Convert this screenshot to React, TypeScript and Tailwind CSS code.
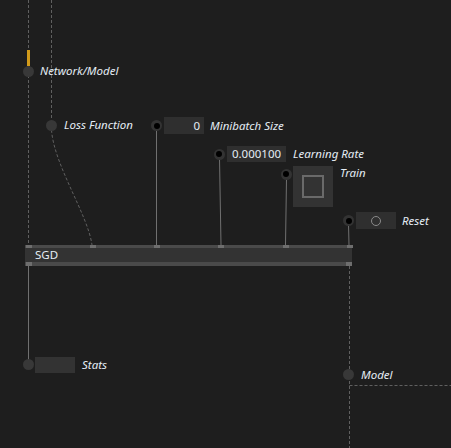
import React from "react";

const font = { fontFamily: '"Noto Sans", "Open Sans", sans-serif' };

function Dot({ dark, className = "" }: { dark?: boolean; className?: string }) {
  return dark ? (
    <div className={`w-[11px] h-[11px] shrink-0 rounded-full bg-[#333333] flex items-center justify-center ${className}`}>
      <div className="w-[6px] h-[6px] rounded-full bg-black" />
    </div>
  ) : (
    <div className={`w-[11px] h-[11px] shrink-0 rounded-full bg-[#383838] ${className}`} />
  );
}

function Lbl({ text, className = "" }: { text: string; className?: string }) {
  return (
    <span className={`italic text-[11.5px] leading-[14px] text-[#e4ecf4] whitespace-nowrap ${className}`}>
      {text}
    </span>
  );
}

function Port({
  left,
  top,
  dark,
  children,
  className = "",
  dotClass = "",
}: {
  left: number;
  top: number;
  dark?: boolean;
  children?: React.ReactNode;
  className?: string;
  dotClass?: string;
}) {
  return (
    <div className={`absolute flex items-center ${className}`} style={{ left, top }}>
      <Dot dark={dark} className={dotClass} />
      {children}
    </div>
  );
}

export default function App() {
  const pinXs = [28, 92, 156, 220, 285, 349];
  return (
    <div className="relative w-[451px] h-[448px] bg-[#1e1e1e] overflow-hidden" style={font}>
      <svg className="absolute inset-0" width={451} height={448}>
        <g stroke="#606060" strokeWidth={1} fill="none" strokeDasharray="3 2">
          <line x1={28.5} y1={0} x2={28.5} y2={245} />
          <line x1={51.5} y1={0} x2={51.5} y2={120} />
          <path d="M51.5 130 C 54 165, 88 215, 92 245" />
          <line x1={349.5} y1={266} x2={349.5} y2={448} />
          <line x1={349.5} y1={385.5} x2={451} y2={385.5} />
        </g>
        <g stroke="#707070" strokeWidth={1} fill="none">
          <line x1={156.5} y1={130} x2={156.5} y2={245} />
          <line x1={219.5} y1={158} x2={221} y2={245} />
          <line x1={286.5} y1={178} x2={285.5} y2={245} />
          <line x1={348.5} y1={224} x2={349} y2={245} />
          <line x1={28.5} y1={266} x2={28.5} y2={360} />
        </g>
        <rect x={27} y={50} width={3} height={16} fill="#d19a1a" />
      </svg>

      {/* Network/Model */}
      <Port left={22.5} top={64} className="gap-[6.5px]">
        <Lbl text="Network/Model" />
      </Port>

      {/* Loss Function */}
      <Port left={46} top={118} className="gap-[7px]">
        <Lbl text="Loss Function" />
      </Port>

      {/* Minibatch Size */}
      <Port left={151} top={117} dark className="gap-[6px]">
        <div className="ml-[-4px] w-[40px] h-[17px] bg-[#2f2f2f] text-[11.5px] leading-[17px] text-[#e4ecf4] text-right pr-[4px]">
          0
        </div>
        <Lbl text="Minibatch Size" />
      </Port>

      {/* Learning Rate */}
      <Port left={213.5} top={146} dark className="gap-[7px]">
        <div className="ml-[-4.5px] w-[59px] h-[16px] bg-[#2f2f2f] text-[11.5px] leading-[16px] text-[#e4ecf4] text-center">
          0.000100
        </div>
        <Lbl text="Learning Rate" />
      </Port>

      {/* Train */}
      <Port left={280.5} top={166} dark className="!items-start gap-[7px]" dotClass="mt-[2.5px]">
        <div className="ml-[-5.5px] w-[40px] h-[41px] bg-[#333333] flex items-center justify-center">
          <div className="w-[22px] h-[23px] border-2 border-[#6a6a6a]" />
        </div>
        <Lbl text="Train" />
      </Port>

      {/* Reset */}
      <Port left={343} top={212} dark className="gap-[6px]">
        <div className="ml-[-4px] w-[40px] h-[17px] bg-[#2f2f2f] flex items-center justify-center">
          <div className="w-[10px] h-[10px] rounded-full border border-[#8a8a8a]" />
        </div>
        <Lbl text="Reset" />
      </Port>

      {/* SGD node */}
      <div className="absolute left-[25px] top-[245px] w-[327px] flex flex-col">
        <div className="relative h-[3px] bg-[#4a4a4a]">
          {pinXs.map((px) => (
            <div
              key={px}
              className="absolute top-0 w-[6px] h-[3px] bg-[#6e6e6e]"
              style={{ left: px - 25 - 2.5 }}
            />
          ))}
        </div>
        <div className="h-[14px] bg-[#333333] text-[11.5px] leading-[14px] text-[#e4ecf4] pl-[10px]">
          SGD
        </div>
        <div className="flex justify-between h-[4px] bg-[#4a4a4a] px-[0.5px]">
          <div className="w-[6px] h-[4px] bg-[#6e6e6e]" />
          <div className="w-[6px] h-[4px] bg-[#6e6e6e]" />
        </div>
      </div>

      {/* Stats */}
      <Port left={22.5} top={356.5} className="gap-[7px]">
        <div className="ml-[-5.5px] w-[40px] h-[16px] bg-[#333333]" />
        <Lbl text="Stats" />
      </Port>

      {/* Model */}
      <Port left={343} top={367.5} className="gap-[7px]">
        <Lbl text="Model" />
      </Port>
    </div>
  );
}
